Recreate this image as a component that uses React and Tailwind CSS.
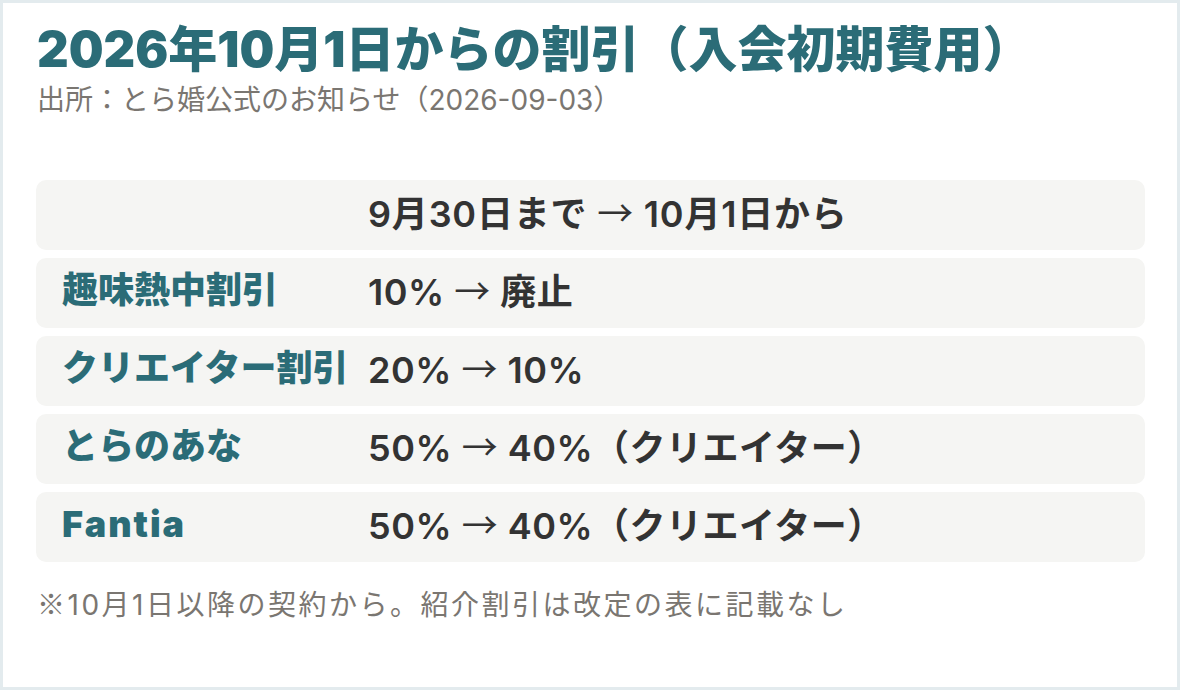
function Arrow() {
  return <span style={{ fontFamily: '"Noto Sans CJK JP", sans-serif' }} className="font-normal">→</span>;
}

export default function App() {
  const rows = [
    ["趣味熱中割引", "10%", "廃止", ""],
    ["クリエイター割引", "20%", "10%", ""],
    ["とらのあな", "50%", "40%（クリエイター）", ""],
    ["Fantia", "50%", "40%（クリエイター）", "tracking-[2px]"],
  ];
  const font = { fontFamily: 'Inter, "Noto Sans CJK JP", sans-serif' };
  return (
    <div className="w-[1180px] h-[690px] bg-[#e3ebee] p-[3px]" style={font}>
      <div className="w-full h-full bg-white pl-[34px] pt-[19px]">
        <h1 className="text-[49px] leading-[56px] font-black text-[#2b6c77] whitespace-nowrap">
          2026年10月1日からの割引（入会初期費用）
        </h1>
        <p className="text-[28px] leading-[32px] text-[#7a7671] mt-[6px] whitespace-nowrap">
          出所：とら婚公式のお知らせ（2026-09-03）
        </p>
        <div className="mt-[64px] ml-[-1px] w-[1109px] flex flex-col gap-[8px]">
          <div className="h-[70px] rounded-[10px] bg-[#f5f5f3] flex items-center pb-[6px]">
            <div className="w-[332px] shrink-0" />
            <div className="text-[36px] font-semibold text-[#333333] tracking-[0.8px] whitespace-nowrap">
              9月30日まで <Arrow /> 10月1日から
            </div>
          </div>
          {rows.map(([a, b, c, t]) => (
            <div key={a} className="h-[70px] rounded-[10px] bg-[#f5f5f3] flex items-center pb-[6px]">
              <div className={"w-[332px] shrink-0 pl-[26px] text-[36px] font-black text-[#2b6c77] whitespace-nowrap " + t}>{a}</div>
              <div className="text-[36px] font-semibold text-[#333333] tracking-[0.5px] whitespace-nowrap">
                {b} <Arrow /> {c}
              </div>
            </div>
          ))}
        </div>
        <p className="mt-[23px] text-[28px] leading-[36px] text-[#7a7671] tracking-[2.5px] whitespace-nowrap">
          <span style={{ fontFamily: '"Noto Sans CJK JP", sans-serif' }}>※</span>10月1日以降の契約から。紹介割引は改定の表に記載なし
        </p>
      </div>
    </div>
  );
}
